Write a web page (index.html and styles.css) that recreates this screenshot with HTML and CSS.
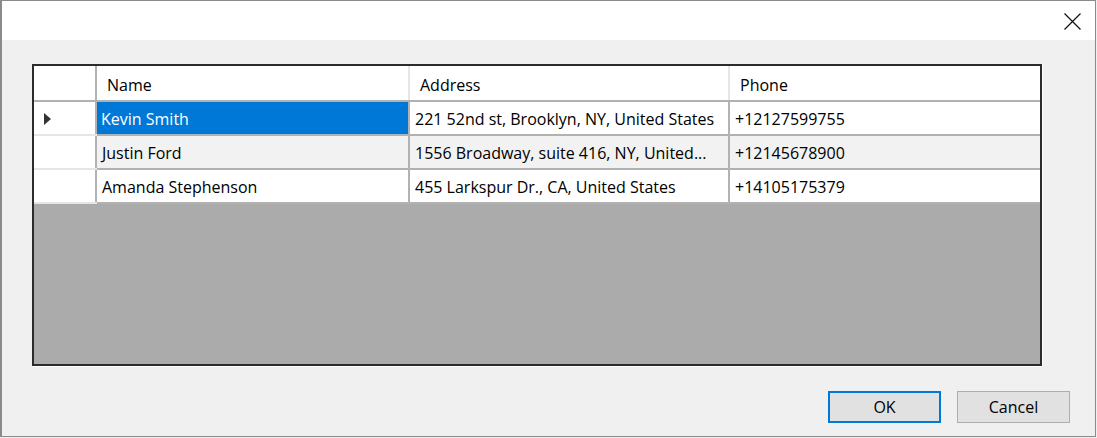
FILE: index.html
```html
<!DOCTYPE html>
<html lang="en">
<head>
    <meta charset="UTF-8">
    <meta name="viewport" content="width=device-width, initial-scale=1.0">
    <title>Contacts</title>
    <link rel="stylesheet" href="styles.css">
</head>
<body>
    <div class="window">
        <div class="titlebar">
            <span class="close">
                <svg width="17" height="17" viewBox="0 0 17 17">
                    <path d="M0.5 0.5 L16.5 16.5 M16.5 0.5 L0.5 16.5" stroke="#111" stroke-width="1.2" fill="none"/>
                </svg>
            </span>
        </div>
        <div class="client">
            <div class="grid">
                <table>
                    <colgroup>
                        <col class="col-rowhead">
                        <col class="col-name">
                        <col class="col-address">
                        <col class="col-phone">
                    </colgroup>
                    <thead>
                        <tr>
                            <th class="rowhead"></th>
                            <th>Name</th>
                            <th>Address</th>
                            <th>Phone</th>
                        </tr>
                    </thead>
                    <tbody>
                        <tr>
                            <td class="rowhead"><span class="current"></span></td>
                            <td class="selected">Kevin Smith</td>
                            <td>221 52nd st, Brooklyn, NY, United States</td>
                            <td>+12127599755</td>
                        </tr>
                        <tr class="alt">
                            <td class="rowhead"></td>
                            <td>Justin Ford</td>
                            <td>1556 Broadway, suite 416, NY, United...</td>
                            <td>+12145678900</td>
                        </tr>
                        <tr>
                            <td class="rowhead"></td>
                            <td>Amanda Stephenson</td>
                            <td>455 Larkspur Dr., CA, United States</td>
                            <td>+14105175379</td>
                        </tr>
                    </tbody>
                </table>
            </div>
            <div class="buttons">
                <button class="btn default">OK</button>
                <button class="btn">Cancel</button>
            </div>
        </div>
    </div>
</body>
</html>
```

FILE: styles.css
```css
* {
    margin: 0;
    padding: 0;
    box-sizing: border-box;
}

body {
    font-family: "Open Sans", "Noto Sans", Arial, sans-serif;
    font-size: 16px;
    color: #000;
    background: #f0f0f0;
}

.window {
    width: 1096px;
    height: 437px;
    border: 1px solid #8a8a8a;
    border-left-width: 2px;
    display: flex;
    flex-direction: column;
    background: #f0f0f0;
}

.titlebar {
    height: 39px;
    background: #fff;
    display: flex;
    justify-content: flex-end;
    align-items: center;
    padding-right: 14px;
}

.close {
    display: flex;
    margin-top: 1px;
}

.client {
    flex: 1;
    padding: 24px 52px 0 30px;
    display: flex;
    flex-direction: column;
}

.grid {
    width: 1010px;
    height: 302px;
    background: #ababab;
    border: 2px solid #2b2b2b;
    box-shadow: 1px 1px 0 #fff;
    overflow: hidden;
}

table {
    width: 1006px;
    border-collapse: collapse;
    table-layout: fixed;
}

.col-rowhead {
    width: 62px;
}

.col-name {
    width: 313px;
}

.col-address {
    width: 320px;
}

th, td {
    height: 34px;
    padding: 1px 6px 0 5px;
    text-align: left;
    white-space: nowrap;
    overflow: hidden;
    background: #fff;
    border-right: 2px solid #b2b2b2;
    border-bottom: 2px solid #b2b2b2;
}

th {
    height: 35px;
    font-weight: normal;
    padding-left: 10px;
    padding-top: 3px;
    border-right-color: #e6e6e6;
}

th:last-child, td:last-child {
    border-right: none;
}

thead th.rowhead {
    border-right-color: #b2b2b2;
}

td.rowhead {
    border-bottom-color: #e6e6e6;
    border-right-color: #b2b2b2;
    padding-left: 10px;
}

tr.alt td {
    background: #f2f2f2;
}

tr.alt td.rowhead {
    background: #fff;
}

td.selected {
    background: #0078d7;
    color: #fff;
    padding-left: 4px;
}

.current {
    display: block;
    width: 0;
    height: 0;
    border-top: 6px solid transparent;
    border-bottom: 6px solid transparent;
    border-left: 7px solid #333;
}

.buttons {
    display: flex;
    justify-content: flex-end;
    gap: 16px;
    margin-top: 25px;
    margin-right: -27px;
}

.btn {
    width: 113px;
    height: 32px;
    font-family: inherit;
    font-size: 16px;
    background: #e1e1e1;
    border: 1px solid #adadad;
    color: #000;
}

.btn.default {
    border: 2px solid #0078d7;
}
```
